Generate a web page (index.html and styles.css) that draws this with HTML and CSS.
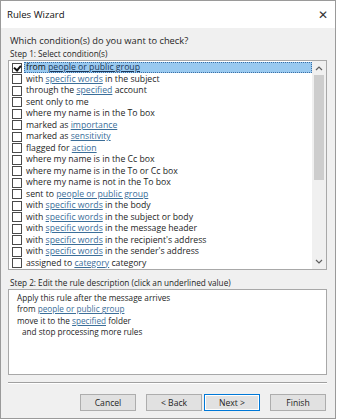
FILE: index.html
```html
<!DOCTYPE html>
<html lang="en">
<head>
    <meta charset="UTF-8">
    <title>Rules Wizard</title>
    <link rel="stylesheet" href="styles.css">
</head>
<body>
    <div class="window">
        <div class="titlebar">
            <span class="title">Rules Wizard</span>
            <span class="close">&#x2715;</span>
        </div>
        <div class="content">
            <div class="question">Which condition(s) do you want to check?</div>
            <div class="label">Step 1: Select condition(s)</div>
            <div class="listbox">
                <div class="items">
                    <div class="row"><span class="box checked"></span><span class="text selected">from <u>people or public group</u></span></div>
                    <div class="row"><span class="box"></span><span class="text">with <a>specific words</a> in the subject</span></div>
                    <div class="row"><span class="box"></span><span class="text">through the <a>specified</a> account</span></div>
                    <div class="row"><span class="box"></span><span class="text">sent only to me</span></div>
                    <div class="row"><span class="box"></span><span class="text">where my name is in the To box</span></div>
                    <div class="row"><span class="box"></span><span class="text">marked as <a>importance</a></span></div>
                    <div class="row"><span class="box"></span><span class="text">marked as <a>sensitivity</a></span></div>
                    <div class="row"><span class="box"></span><span class="text">flagged for <a>action</a></span></div>
                    <div class="row"><span class="box"></span><span class="text">where my name is in the Cc box</span></div>
                    <div class="row"><span class="box"></span><span class="text">where my name is in the To or Cc box</span></div>
                    <div class="row"><span class="box"></span><span class="text">where my name is not in the To box</span></div>
                    <div class="row"><span class="box"></span><span class="text">sent to <a>people or public group</a></span></div>
                    <div class="row"><span class="box"></span><span class="text">with <a>specific words</a> in the body</span></div>
                    <div class="row"><span class="box"></span><span class="text">with <a>specific words</a> in the subject or body</span></div>
                    <div class="row"><span class="box"></span><span class="text">with <a>specific words</a> in the message header</span></div>
                    <div class="row"><span class="box"></span><span class="text">with <a>specific words</a> in the recipient's address</span></div>
                    <div class="row"><span class="box"></span><span class="text">with <a>specific words</a> in the sender's address</span></div>
                    <div class="row"><span class="box"></span><span class="text">assigned to <a>category</a> category</span></div>
                </div>
                <div class="scrollbar">
                    <svg class="arrow" width="8" height="6" viewBox="0 0 8 6"><path d="M1 5 L4 2 L7 5" fill="none" stroke="#606060" stroke-width="1.2"/></svg>
                    <div class="track"><div class="thumb"></div></div>
                    <svg class="arrow" width="8" height="6" viewBox="0 0 8 6"><path d="M1 1 L4 4 L7 1" fill="none" stroke="#606060" stroke-width="1.2"/></svg>
                </div>
            </div>
            <div class="label step2">Step 2: Edit the rule description (click an underlined value)</div>
            <div class="description">
                <div>Apply this rule after the message arrives</div>
                <div>from <a>people or public group</a></div>
                <div>move it to the <a>specified</a> folder</div>
                <div class="indent">and stop processing more rules</div>
            </div>
            <div class="separator"></div>
            <div class="buttons">
                <button>Cancel</button>
                <button class="gap">&lt; Back</button>
                <button class="default">Next &gt;</button>
                <button class="gap">Finish</button>
            </div>
        </div>
    </div>
</body>
</html>
```

FILE: styles.css
```css
body {
    margin: 0;
    background: #fff;
    font-family: "Open Sans", "Noto Sans", sans-serif;
    font-size: 8.2px;
    color: #1e1e1e;
}

.window {
    width: 334px;
    height: 417px;
    border: 1px solid #9a9a9a;
    display: flex;
    flex-direction: column;
    background: #f0f0f0;
}

.titlebar {
    height: 27px;
    background: #fff;
    display: flex;
    align-items: center;
    justify-content: space-between;
    padding: 0 6px 0 6px;
    flex-shrink: 0;
}

.title {
    font-size: 9.6px;
    color: #111;
}

.close {
    font-size: 12px;
    color: #333;
    margin-right: 1px;
}

.content {
    flex: 1;
    display: flex;
    flex-direction: column;
    padding: 6px 8px 0 7px;
}

.question {
    font-size: 9.3px;
    line-height: 13px;
    padding-left: 2px;
}

.label {
    line-height: 13px;
    padding-left: 2px;
}

.listbox {
    height: 208px;
    border: 1px solid #a8a8a8;
    background: #fff;
    display: flex;
}

.items {
    flex: 1;
    padding-top: 1px;
    font-size: 8.7px;
}

.row {
    height: 11.5px;
    display: flex;
    align-items: center;
}

.box {
    width: 8px;
    height: 8px;
    border: 1px solid #4a4a4a;
    background: #fff;
    margin: 0 2px 0 3px;
    flex-shrink: 0;
    position: relative;
}

.box.checked::after {
    content: "";
    position: absolute;
    left: 2px;
    top: 0px;
    width: 3px;
    height: 5px;
    border: solid #111;
    border-width: 0 2px 2px 0;
    transform: rotate(40deg);
}

.text {
    flex: 1;
    line-height: 11px;
    padding-left: 2px;
    white-space: nowrap;
}

.text.selected {
    background: #99c9ef;
    outline: 1px dotted #3a6ea5;
    outline-offset: -1px;
    color: #111;
}

a {
    color: #3b6e99;
    text-decoration: underline;
}

u {
    color: #1e3a5c;
}

.scrollbar {
    width: 14px;
    background: #f0f0f0;
    display: flex;
    flex-direction: column;
    align-items: center;
}

.arrow {
    margin: 4px 0;
}

.track {
    flex: 1;
    width: 100%;
    display: flex;
    justify-content: center;
}

.thumb {
    width: 10px;
    height: 105px;
    background: #cdcdcd;
}

.step2 {
    margin-top: 6px;
    line-height: 13px;
}

.description {
    height: 82px;
    border: 1px solid #a8a8a8;
    background: #fff;
    padding: 2px 6px 0 8px;
    line-height: 11.4px;
}

.indent {
    padding-left: 5px;
}

.separator {
    margin-top: 7px;
    border-top: 1px solid #a0a0a0;
    border-bottom: 1px solid #fff;
}

.buttons {
    display: flex;
    justify-content: flex-end;
    padding-top: 10px;
    padding-right: 1px;
    gap: 2px;
}

button {
    width: 56px;
    height: 17px;
    background: #e1e1e1;
    border: 1px solid #adadad;
    font-family: inherit;
    font-size: 8.6px;
    color: #1e1e1e;
    padding: 0;
}

button.gap {
    margin-left: 8px;
}

button.default {
    border: 1px solid #0078d7;
    box-shadow: inset 0 0 0 1px #fff;
}
```
